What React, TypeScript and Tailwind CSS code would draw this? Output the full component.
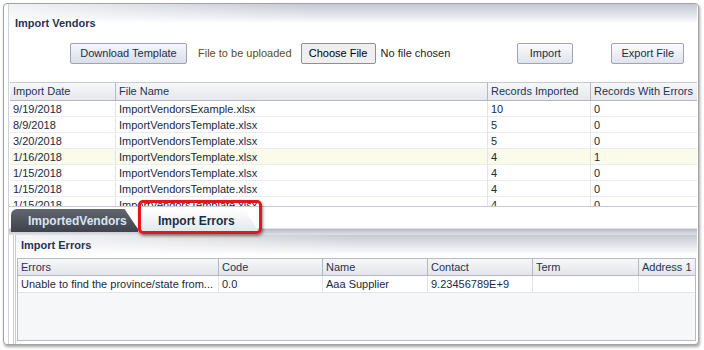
import React from 'react'

const font = { fontFamily: '"Liberation Sans", Arial, sans-serif' }

const uploads = [
    { date: '9/19/2018', file: 'ImportVendorsExample.xlsx', imported: '10', errors: '0' },
    { date: '8/9/2018', file: 'ImportVendorsTemplate.xlsx', imported: '5', errors: '0' },
    { date: '3/20/2018', file: 'ImportVendorsTemplate.xlsx', imported: '5', errors: '0' },
    { date: '1/16/2018', file: 'ImportVendorsTemplate.xlsx', imported: '4', errors: '1', selected: true },
    { date: '1/15/2018', file: 'ImportVendorsTemplate.xlsx', imported: '4', errors: '0' },
    { date: '1/15/2018', file: 'ImportVendorsTemplate.xlsx', imported: '4', errors: '0' },
    { date: '1/15/2018', file: 'ImportVendorsTemplate.xlsx', imported: '4', errors: '0' },
]

const errorCols = ['Errors', 'Code', 'Name', 'Contact', 'Term', 'Address 1']
const errorRow = ['Unable to find the province/state from...', '0.0', 'Aaa Supplier', '9.23456789E+9', '', '']

function Btn({ children, className = '' }: { children: React.ReactNode; className?: string }) {
    return (
        <button
            className={`h-[21px] px-[6px] border border-[#9ea4b0] rounded-[2px] bg-gradient-to-b from-[#fbfcfe] to-[#dfe3ec] text-[11px] text-[#1c2d4a] leading-none whitespace-nowrap ${className}`}
        >
            {children}
        </button>
    )
}

export default function App() {
    return (
        <div className="w-[704px] h-[350px] bg-white pt-[3px] pl-[3px] pr-[5px] pb-[5px] text-[11px] text-[#1a2940]" style={font}>
            <div className="relative h-full border border-[#a3a3a3] rounded-[4px] shadow-[1px_2px_3px_rgba(0,0,0,0.35)] overflow-hidden bg-white pl-[4px] pr-[1px] flex flex-col">
                <div className="flex-1 flex flex-col border-l border-[#cfd2d8]">
                    {/* header */}
                    <div className="h-[32px] pl-[6px] flex items-end bg-[linear-gradient(to_right,rgba(255,255,255,0.75),rgba(255,255,255,0)_45%),linear-gradient(to_bottom,#c3c7d1_0%,#eceef2_45%,#ffffff_60%)]">
                        <span className="font-bold text-[11px] text-[#1f3454] mb-[5px]">Import Vendors</span>
                    </div>

                    {/* upload row */}
                    <div className="h-[46px] flex items-start pt-[7px] whitespace-nowrap">
                        <Btn className="ml-[61px] w-[117px] !from-[#f4f6fb] !to-[#d9deea]">Download Template</Btn>
                        <span className="ml-[11px] leading-[21px] text-[#5e4c12]">File to be uploaded</span>
                        <button className="ml-[9px] h-[21px] w-[75px] border border-[#8f8f8f] rounded-[2px] bg-[#efefef] text-[11px] text-black leading-none">Choose File</button>
                        <span className="ml-[5px] leading-[21px] text-[#222]">No file chosen</span>
                        <Btn className="ml-[67px] w-[56px]">Import</Btn>
                        <Btn className="ml-[38px] w-[73px]">Export File</Btn>
                    </div>

                    {/* uploads table */}
                    <div className="ml-[1px] h-[124px] overflow-hidden border-t border-[#c6c9cf]">
                        <div className="grid grid-cols-[105px_372px_103px_106px] h-[18px] bg-gradient-to-b from-[#f6f7f9] to-[#e6e8ed] border-b border-[#b4b8c0]">
                            {['Import Date', 'File Name', 'Records Imported', 'Records With Errors'].map((h, i) => (
                                <div key={h} className={`pl-[3px] leading-[17px] whitespace-nowrap overflow-hidden text-[#1f3454] ${i > 0 ? 'border-l border-[#b4b8c0]' : ''}`}>{h}</div>
                            ))}
                        </div>
                        {uploads.map((r, idx) => (
                            <div key={idx} className={`grid grid-cols-[105px_372px_103px_106px] h-[16px] border-b border-[#ebecee] ${r.selected ? 'bg-[#fafbe9]' : 'bg-white'}`}>
                                {[r.date, r.file, r.imported, r.errors].map((c, i) => (
                                    <div key={i} className={`pl-[3px] leading-[16px] whitespace-nowrap overflow-hidden ${i > 0 ? 'border-l border-[#e3e4e7]' : ''}`}>{c}</div>
                                ))}
                            </div>
                        ))}
                    </div>

                    {/* tab bar */}
                    <div className="relative h-[29px] border-t border-[#c6c9cf] bg-[linear-gradient(to_bottom,#ffffff_0%,#ffffff_74%,#b9bdc6_80%,#dfe2e8_100%)] flex items-end pl-[2px] pb-[3px]">
                        <div className="h-[23px] w-[129px] rounded-tl-[6px] bg-gradient-to-b from-[#62676f] to-[#3e434b] [clip-path:polygon(0_0,88%_0,100%_100%,0_100%)] flex items-center pl-[17px] font-bold text-[12px] text-[#d6e6f6]">
                            ImportedVendors
                        </div>
                        <div className="-ml-[2px] h-[23px] w-[121px] rounded-tl-[4px] bg-gradient-to-b from-[#ffffff] to-[#e4e6eb] [clip-path:polygon(0_0,88%_0,100%_100%,0_100%)] flex items-center pl-[20px] font-bold text-[12px] text-[#1c2d4a]">
                            Import Errors
                        </div>
                        <div className="absolute left-[129px] top-[-7px] w-[124px] h-[34px] border-[3px] border-[#e8141b] rounded-[5px] shadow-[1px_2px_3px_rgba(0,0,0,0.45)]" />
                    </div>

                    {/* errors panel */}
                    <div className="flex-1 flex flex-col ml-[4px] border-l-[3px] border-double border-[#c9ccd2]">
                        <div className="h-[20px] pl-[5px] flex items-center bg-[linear-gradient(to_right,rgba(255,255,255,0.8),rgba(255,255,255,0)_50%),linear-gradient(to_bottom,#c5c9d2,#ffffff)]">
                            <span className="font-bold text-[11px] text-[#1f3454]">Import Errors</span>
                        </div>
                        <div className="flex-1 mt-[3px] ml-[1px] mr-[1px] mb-[3px] border border-[#b9bcc3] bg-[#f6f7f9] overflow-hidden">
                            <div className="grid grid-cols-[200px_104px_105px_105px_106px_58px] h-[17px] bg-gradient-to-b from-[#f6f7f9] to-[#e4e6eb] border-b border-[#b4b8c0]">
                                {errorCols.map((h, i) => (
                                    <div key={h} className={`pl-[3px] leading-[16px] whitespace-nowrap overflow-hidden text-[#1f3454] ${i > 0 ? 'border-l border-[#b4b8c0]' : ''}`}>{h}</div>
                                ))}
                            </div>
                            <div className="grid grid-cols-[200px_104px_105px_105px_106px_58px] h-[17px] bg-white border-b border-[#e3e4e7]">
                                {errorRow.map((c, i) => (
                                    <div key={i} className={`pl-[3px] leading-[16px] whitespace-nowrap overflow-hidden ${i > 0 ? 'border-l border-[#e3e4e7]' : ''}`}>{c}</div>
                                ))}
                            </div>
                        </div>
                    </div>
                </div>
            </div>
        </div>
    )
}
